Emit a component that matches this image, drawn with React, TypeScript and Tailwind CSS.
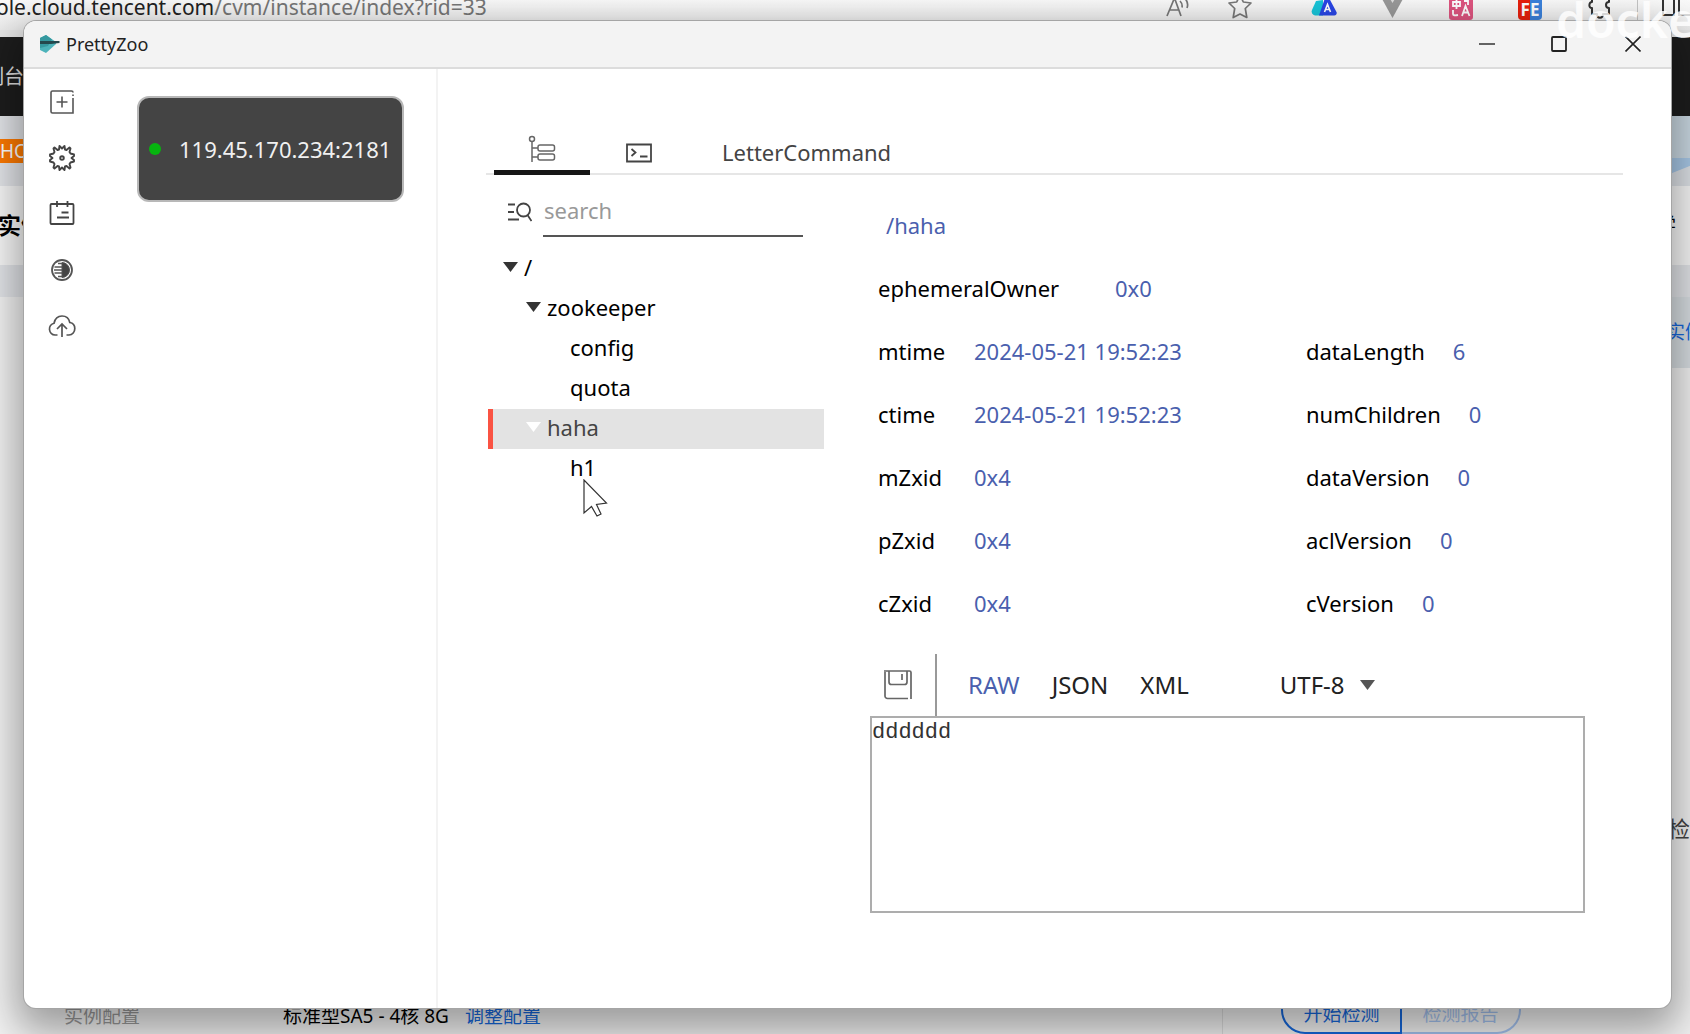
import React, { useState } from "react";

const treeNodes = [
  { id: "root", name: "/", depth: 0, expandable: true },
  { id: "zookeeper", name: "zookeeper", depth: 1, expandable: true },
  { id: "config", name: "config", depth: 2, expandable: false },
  { id: "quota", name: "quota", depth: 2, expandable: false },
  { id: "haha", name: "haha", depth: 1, expandable: true },
  { id: "h1", name: "h1", depth: 2, expandable: false },
];

const indents = ["pl-[10px]", "pl-[33px]", "pl-[77px]"];

const leftStats = [
  { label: "mtime", value: "2024-05-21 19:52:23" },
  { label: "ctime", value: "2024-05-21 19:52:23" },
  { label: "mZxid", value: "0x4" },
  { label: "pZxid", value: "0x4" },
  { label: "cZxid", value: "0x4" },
];

const rightStats = [
  { label: "dataLength", value: "6" },
  { label: "numChildren", value: "0" },
  { label: "dataVersion", value: "0" },
  { label: "aclVersion", value: "0" },
  { label: "cVersion", value: "0" },
];

const AddIcon = () => (
  <svg width="26" height="26" viewBox="0 0 26 26" fill="none" stroke="#555" strokeWidth="1.6">
    <path d="M24 3V3.5A1.5 1.5 0 0 0 22.500 2H3.500A1.500 1.500 0 0 0 2 3.500V22.500A1.500 1.500 0 0 0 3.500 24H24V9M24 5.500V7" />
    <path d="M13 7.500V18.500M7.500 13H18.500" />
  </svg>
);

const GearIcon = () => (
  <svg width="28" height="28" viewBox="0 0 28 28" fill="none" stroke="#444" strokeWidth="1.9" strokeLinejoin="round">
    <path d="M11 5.500L11.500 2L14 4.500L16.500 2L17 5.500L18.500 6L21.500 3.500L22.500 4.500L21.500 8L22.500 9.500L26 10.500V12L23.500 14L26 16V17.500L22.500 18.500L21.500 20L22.500 23.500L21.500 24.500L18.500 22L17 22.500L16.500 26L14 23.500L11.500 26L11 22.500L9.500 22L6.500 24.500L5.500 23.500L6.500 20L5.500 18.500L2 17.500V16L4.500 14L2 12V10.500L5.500 9.500L6.500 8L5.500 4.500L6.500 3.500L9.500 6Z" />
    <circle cx="14" cy="14" r="1.8" />
  </svg>
);

const LogIcon = () => (
  <svg width="26" height="26" viewBox="0 0 26 26" fill="none" stroke="#444" strokeWidth="1.8">
    <rect x="1.5" y="3" width="23" height="20" rx="1" />
    <path d="M8 0V6M18.500 0V6M12.500 11.500H19.500M8 16.500H20" />
  </svg>
);

const ThemeIcon = () => (
  <svg width="24" height="24" viewBox="0 0 24 24" fill="none" stroke="#555">
    <circle cx="12" cy="12" r="10" strokeWidth="1.8" />
    <path d="M12 4.500A7.500 7.500 0 0 1 12 19.500Z" fill="#444" />
    <path d="M8 5.500H12M4.500 9H12M4 12H12M4.500 15H12M8 18.500H12" strokeWidth="1.4" />
  </svg>
);

const CloudIcon = () => (
  <svg width="28" height="24" viewBox="0 0 28 24" fill="none" stroke="#555" strokeWidth="1.7">
    <path d="M9.500 21H7A6 6 0 0 1 6 9.200C7 4.500 10 2 14 2C18 2 21 4.500 21.800 8.500C25 9 26.800 11.500 26.800 14.500C26.800 18 24.500 21 21 21H18.500" />
    <path d="M14 23V10.500M9 15L14 10L19 15" />
  </svg>
);

const TreeTabIcon = () => (
  <svg width="28" height="28" viewBox="0 0 28 28" fill="none" stroke="#666" strokeWidth="1.5">
    <circle cx="4" cy="4" r="2.5" />
    <path d="M4 6.500V27M4 13H10M4 22H10" />
    <rect x="10" y="10" width="16.5" height="6" rx="2" />
    <rect x="10" y="19" width="16.5" height="6" rx="2" />
  </svg>
);

const TerminalIcon = () => (
  <svg width="26" height="20" viewBox="0 0 26 20" fill="none" stroke="#444" strokeWidth="1.8">
    <path d="M1 1.500H25V18.500H1Z" />
    <path d="M5.500 6L9.500 9.500L5.500 13M14 13.500H21.500" />
  </svg>
);

const SearchIcon = () => (
  <svg width="24" height="20" viewBox="0 0 24 20" fill="none" stroke="#444" strokeWidth="1.8">
    <circle cx="15.5" cy="8" r="6.5" />
    <path d="M19.500 13L23.500 19M0 2.500H7M0 10H6M0 17.500H11" />
  </svg>
);

const SaveIcon = () => (
  <svg width="28" height="30" viewBox="0 0 28 30" fill="none" stroke="#666" strokeWidth="1.7">
    <path d="M1 2V26A2.500 2.500 0 0 0 3.500 28.500H24" />
    <path d="M0 1H25.500A1.500 1.500 0 0 1 27 2.500V29" />
    <path d="M5 1V12A2.500 2.500 0 0 0 7.500 14.500H20.500A2.500 2.500 0 0 0 23 12V1M18 4V10" />
  </svg>
);

const Caret = ({ className }: { className: string }) => (
  <svg width="15" height="10" viewBox="0 0 15 10" className={className}>
    <path d="M0 0H15L7.500 10Z" fill="currentColor" />
  </svg>
);

const Logo = () => (
  <svg width="21" height="20" viewBox="0 0 21 20">
    <path d="M1 4L7 1L17 8L17 10L7 19L1 16Z" fill="#4db3ba" />
    <path d="M1 4L7 1L13 5.500L9 12L1 14Z" fill="#35989f" />
    <path d="M1 7H20.500V9L12 10H1Z" fill="#24484d" />
  </svg>
);

const sidebarItems = [
  { label: "Add server", icon: <AddIcon /> },
  { label: "Settings", icon: <GearIcon /> },
  { label: "Logs", icon: <LogIcon /> },
  { label: "Theme", icon: <ThemeIcon /> },
  { label: "Export", icon: <CloudIcon /> },
];

const BrowserBar = () => (
  <div className="flex h-[30px] items-start justify-between bg-gradient-to-b from-[#fafafa] to-[#ececec]">
    <p className="-ml-1 -mt-2 whitespace-nowrap text-[21px] leading-[30px] text-[#777]">
      <span className="text-[#222]">ole.cloud.tencent.com</span>
      /cvm/instance/index?rid=33
    </p>
    <div className="flex h-5 shrink-0 items-end overflow-hidden text-[#777]">
      <svg width="24" height="20" viewBox="0 0 24 20" fill="none" stroke="currentColor" strokeWidth="1.7" className="mr-[38px]">
        <path d="M1 16L8.500 -2L15 16M3.500 10H12.500M14 1C16 3 16.500 5 16 7.500M18.500 -2C21.500 1 22.500 4 21 8" />
      </svg>
      <svg width="24" height="20" viewBox="0 0 24 20" fill="none" stroke="currentColor" strokeWidth="1.7" strokeLinejoin="round" className="mr-[59px]">
        <path d="M12 -5L15.300 2L23 3L17.300 8.500L18.800 17.500L12 14L5.200 17.500L6.700 8.500L1 3L8.700 2Z" />
      </svg>
      <svg width="26" height="20" viewBox="0 0 26 20" className="mr-[44px]">
        <path d="M5 1L12 0V15.500H4A4 4 0 0 1 1 10Z" fill="#18c5d9" />
        <path d="M14 -2H18L25.500 12A2.500 2.500 0 0 1 23 15.500H8Z" fill="#2946e6" />
        <path d="M13.500 12L16.500 4.500L19.500 12M14.500 9.500H18.500" fill="none" stroke="#fff" strokeWidth="1.6" />
      </svg>
      <svg width="23" height="20" viewBox="0 0 23 20" className="mr-[45px]">
        <path d="M0 -3H23L11.500 18Z" fill="#999" />
        <path d="M8 -3H15L11.500 3Z" fill="#ddd" />
      </svg>
      <svg width="24" height="20" viewBox="0 0 24 20" className="mr-[45px]" fill="none" stroke="#fff" strokeWidth="1.8">
        <rect x="0" y="-5" width="24" height="25" rx="3" fill="#df5580" stroke="none" />
        <path d="M4 2H11V6H4ZM7.500 0V9M15 1H19V5M4 10V14Q4 16 9 15M13 16L16.500 6L20.500 16M14.500 12.500H19" />
      </svg>
      <span className="mr-[46px] flex h-5 w-6 items-center justify-center rounded-b-sm bg-gradient-to-r from-[#e8200c] from-50% to-[#3b82dc] to-50% text-[17px] font-bold leading-4 text-white">
        FE
      </span>
      <svg width="24" height="20" viewBox="0 0 24 20" fill="none" stroke="#333" strokeWidth="2" strokeLinejoin="round" className="mr-[25px]">
        <path d="M4 -3V2C1 2 0 8 4 8V14H9C9 19 15 19 15 14H21V8C17 8 17 2 21 2V-3" />
      </svg>
      <span className="mr-6 h-5 w-px bg-[#c5c5c5]" />
      <svg width="28" height="20" viewBox="0 0 28 20" fill="none" stroke="#333" strokeWidth="2">
        <path d="M1 -2V15H12V-2M17 -2V15H28" />
      </svg>
    </div>
  </div>
);

// Console page that sits behind the application window
const BrowserPage = () => (
  <div className="col-start-1 row-start-1 flex min-w-0 flex-col overflow-hidden bg-[#f3f3f3]">
    <BrowserBar />
    <div className="h-[7px] bg-[#e6e6e6]" />
    <div className="flex h-[79px] items-center bg-[#1d1d1d] text-[20px] text-[#ddd]">
      <span className="-ml-4">制台</span>
    </div>
    <div className="flex h-[70px] items-center justify-between bg-[#e4e6ea]">
      <span className="bg-[#ff7a00] text-[19px] leading-6 text-white">HOT</span>
      <svg width="40" height="70" viewBox="0 0 40 70">
        <path d="M0 0H40V70H0Z" fill="#ccdae4" />
        <path d="M0 42H40V50L0 66Z" fill="#a9c9e8" />
        <path d="M0 66L40 50V70H0Z" fill="#dfe3e8" />
      </svg>
    </div>
    <div className="flex h-[79px] items-center justify-between bg-[#f8f8f8]">
      <span className="-ml-0.5 text-[23px] font-bold text-black">实例</span>
      <span className="mr-[14px] text-[19px] text-black">学</span>
    </div>
    <div className="h-8 bg-[#e3e5e9]" />
    <div className="flex h-[71px] items-center justify-end">
      <a href="#instance" className="flex h-full w-6 items-center whitespace-nowrap bg-[#d9dfe3] text-[19px] text-[#1668dc]">
        实例
      </a>
    </div>
    <div className="flex flex-1 items-center justify-end">
      <span className="mt-[290px] text-[22px] text-[#444]">检</span>
    </div>
    <div className="flex h-9 items-center text-[19px] leading-9 text-black">
      <span className="ml-16 w-[219px] text-[#999]">实例配置</span>
      <span className="whitespace-nowrap">标准型SA5 - 4核 8G</span>
      <a href="#adjust" className="ml-4 whitespace-nowrap text-[#1668dc]">调整配置</a>
      <div className="ml-auto mr-[169px] flex shrink-0 self-end border-l border-[#ddd] pl-[58px]">
        <button className="h-10 w-[121px] rounded-bl-3xl border-2 border-[#1668dc] pb-0.5 text-[#1668dc]">开始检测</button>
        <button className="h-10 w-[119px] rounded-br-3xl border-2 border-l-0 border-[#a5c3f0] pb-0.5 text-[#a5c3f0]">检测报告</button>
      </div>
    </div>
  </div>
);

const TitleBar = () => (
  <header className="flex h-12 shrink-0 items-center border-b-2 border-[#dcdcdc] bg-[#f3f3f3] pl-[15px]">
    <Logo />
    <h1 className="ml-[6px] flex-1 text-[18px] leading-6 text-[#222]">PrettyZoo</h1>
    <button aria-label="Minimize" className="flex h-10 w-[72px] items-center justify-center">
      <svg width="16" height="16" viewBox="0 0 16 16" stroke="#333" strokeWidth="1.5">
        <path d="M0 8H16" />
      </svg>
    </button>
    <button aria-label="Maximize" className="flex h-10 w-[72px] items-center justify-center">
      <svg width="16" height="16" viewBox="0 0 16 16" fill="none" stroke="#222" strokeWidth="1.8">
        <rect x="1" y="1" width="14" height="14" rx="1" />
      </svg>
    </button>
    <button aria-label="Close" className="flex h-10 w-[76px] items-center justify-center">
      <svg width="16" height="16" viewBox="0 0 16 16" stroke="#222" strokeWidth="1.6">
        <path d="M0.500 0.500L15.500 15.500M15.500 0.500L0.500 15.500" />
      </svg>
    </button>
  </header>
);

const Sidebar = () => (
  <aside className="flex w-[414px] shrink-0 border-r-2 border-[#f3f3f3]">
    <nav className="flex w-[76px] flex-col pt-[5px]">
      {sidebarItems.map((item) => (
        <button key={item.label} aria-label={item.label} className="flex h-14 items-center justify-center">
          {item.icon}
        </button>
      ))}
    </nav>
    <button className="ml-[37px] mt-[27px] flex h-[106px] w-[267px] items-center rounded-xl border-2 border-[#b8b8b8] bg-[#444] pl-[10px] text-[22px] text-[#f0f0f0]">
      <span className="h-3 w-3 shrink-0 rounded-full bg-[#06b50f]" />
      <span className="ml-[18px] whitespace-nowrap">119.45.170.234:2181</span>
    </button>
  </aside>
);

const NodeTree = () => {
  const [selected, setSelected] = useState("haha");
  return (
    <section className="w-[336px] shrink-0">
      <div className="flex items-center pl-5 pt-3">
        <label htmlFor="node-search" className="mr-[11px]">
          <SearchIcon />
          <span className="sr-only">Search nodes</span>
        </label>
        <input
          id="node-search"
          type="text"
          placeholder="search"
          className="h-[50px] w-[260px] border-b-2 border-[#555] bg-transparent pb-0.5 pl-px text-[22px] outline-none placeholder:text-[#999]"
        />
      </div>
      <ul className="mt-3">
        {treeNodes.map((node) => {
          const isSelected = node.id === selected;
          return (
            <li key={node.id} className="relative">
              <button
                onClick={() => setSelected(node.id)}
                className={`flex h-10 w-full items-center border-l-[5px] pb-1 text-[22px] ${indents[node.depth]} ${
                  isSelected ? "border-[#fa5343] bg-[#e3e3e3] text-[#444]" : "border-transparent text-black"
                }`}
              >
                {node.expandable && (
                  <Caret className={isSelected ? "mr-[6px] text-white" : "mr-[6px] text-[#333]"} />
                )}
                {node.name}
              </button>
              {node.id === "h1" && (
                <svg width="25" height="38" viewBox="0 0 25 38" className="absolute left-[95px] top-[30px]">
                  <path
                    d="M1 1V34L8.500 27.500L14 37L18 35L13.500 25.500L23.500 24Z"
                    fill="#fff"
                    stroke="#333"
                    strokeWidth="1.2"
                  />
                </svg>
              )}
            </li>
          );
        })}
      </ul>
    </section>
  );
};

const NodeDetail = () => {
  const [format, setFormat] = useState("RAW");
  return (
    <section className="ml-[46px] mr-[38px] flex min-w-0 flex-1 flex-col pb-[95px] pt-[19px]">
      <h2 className="pl-4 text-[22px] leading-[63px] text-[#4a5fae]">/haha</h2>
      <dl className="flex pl-2 leading-[63px]">
        <dt className="w-[237px]">ephemeralOwner</dt>
        <dd className="text-[#4a5fae]">0x0</dd>
      </dl>
      <div className="grid grid-cols-[428px_1fr] pl-2 leading-[63px]">
        <dl>
          {leftStats.map((stat) => (
            <div key={stat.label} className="flex">
              <dt className="w-24">{stat.label}</dt>
              <dd className="whitespace-nowrap text-[#4a5fae]">{stat.value}</dd>
            </div>
          ))}
        </dl>
        <dl>
          {rightStats.map((stat) => (
            <div key={stat.label} className="flex gap-7">
              <dt>{stat.label}</dt>
              <dd className="text-[#4a5fae]">{stat.value}</dd>
            </div>
          ))}
        </dl>
      </div>
      <div className="mt-[19px] flex h-[62px] shrink-0 items-center text-[24px]">
        <button aria-label="Save" className="flex h-full w-[67px] items-center border-r-2 border-[#999] pl-[14px]">
          <SaveIcon />
        </button>
        <div className="ml-[31px] flex gap-8">
          {["RAW", "JSON", "XML"].map((item) => (
            <button
              key={item}
              onClick={() => setFormat(item)}
              className={item === format ? "text-[#4a5fae]" : "text-[#222]"}
            >
              {item}
            </button>
          ))}
        </div>
        <div className="ml-[91px] flex items-center">
          <select aria-label="Charset" defaultValue="UTF-8" className="w-20 appearance-none bg-transparent text-[#222] outline-none">
            <option>UTF-8</option>
          </select>
          <Caret className="text-[#555]" />
        </div>
      </div>
      <textarea
        aria-label="Node data"
        defaultValue="dddddd"
        spellCheck={false}
        className="min-h-[197px] w-full flex-1 resize-none border-2 border-[#adadad] font-['Liberation_Mono',monospace] leading-[30px] text-[#333] outline-none"
      />
    </section>
  );
};

const AppWindow = () => (
  <div className="z-10 col-start-1 row-start-1 mb-[26px] ml-6 mr-[19px] mt-[21px] flex min-w-0 flex-col overflow-hidden rounded-xl bg-white shadow-[0_0_0_1px_#a5a5a5,0_16px_40px_8px_rgba(0,0,0,0.36)]">
    <TitleBar />
    <div className="flex flex-1">
      <Sidebar />
      <main className="flex min-w-0 flex-1 flex-col px-12 text-[22px] text-black">
        <div className="flex h-[106px] shrink-0 items-end border-b-2 border-[#e6e6e6] pl-2">
          <button aria-label="Nodes" className="-mb-0.5 flex h-12 w-24 items-center justify-center border-b-[5px] border-[#161616]">
            <TreeTabIcon />
          </button>
          <button aria-label="Terminal" className="flex h-10 w-[98px] items-center justify-center">
            <TerminalIcon />
          </button>
          <button className="ml-[34px] h-[42px] text-[#444]">LetterCommand</button>
        </div>
        <div className="flex flex-1 pl-0.5">
          <NodeTree />
          <NodeDetail />
        </div>
      </main>
    </div>
  </div>
);

const App = () => {
  return (
    <div className="relative grid min-h-screen grid-cols-1 overflow-hidden font-['Noto_Sans','Noto_Sans_CJK_SC',sans-serif]">
      <BrowserPage />
      <AppWindow />
      <span className="pointer-events-none absolute -right-1.5 -top-3 z-20 text-[48px] font-semibold leading-[64px] text-white/80">
        docke
      </span>
    </div>
  );
};

export default App;
